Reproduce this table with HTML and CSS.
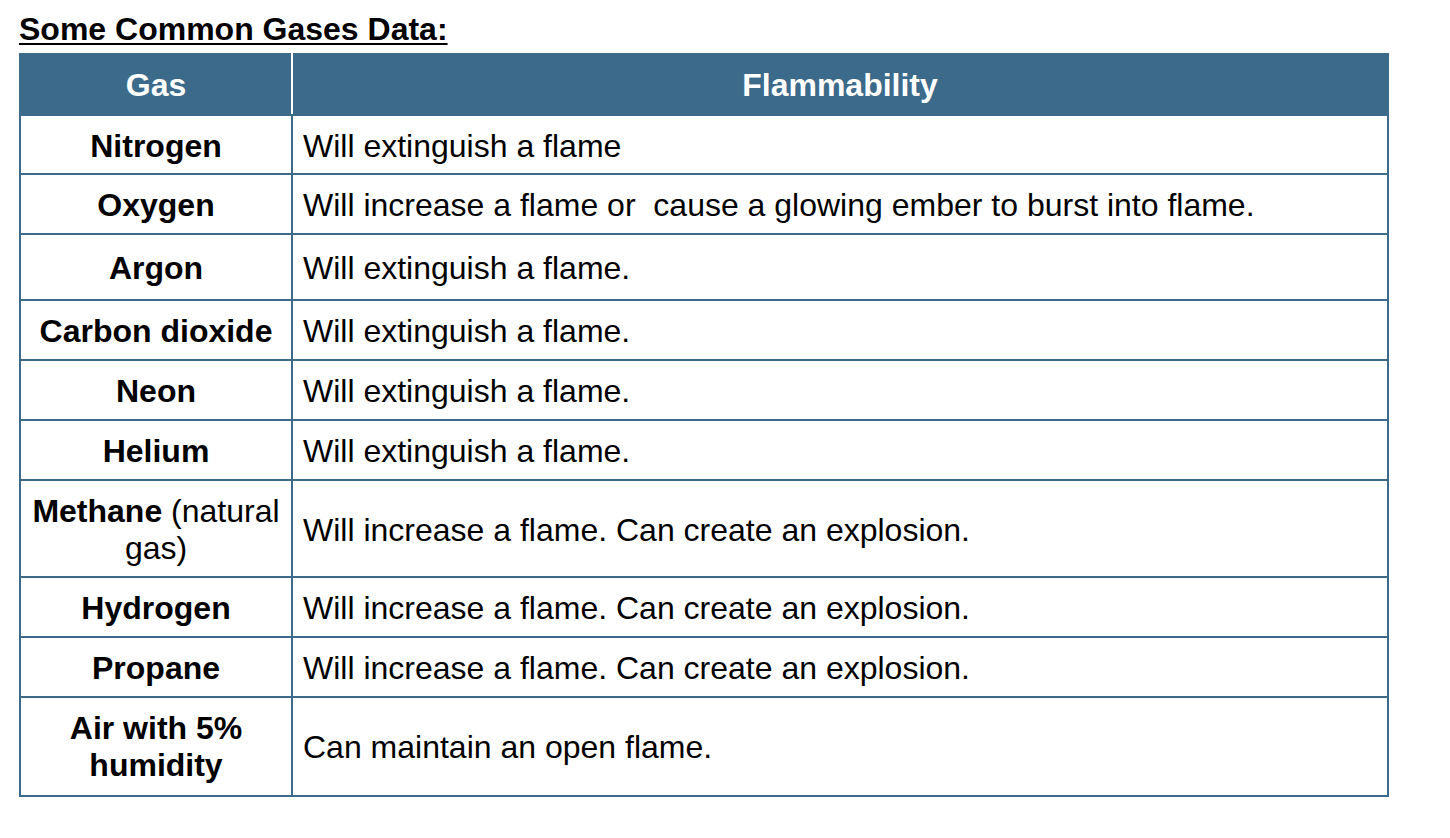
FILE: index.html
```html
<!DOCTYPE html>
<html lang="en">
<head>
<meta charset="utf-8">
<title>Some Common Gases Data</title>
<link rel="stylesheet" href="styles.css">
</head>
<body>
<h1 class="title">Some Common Gases Data:</h1>
<table class="gases">
  <colgroup>
    <col class="col-gas">
    <col class="col-flam">
  </colgroup>
  <thead>
    <tr class="head-row">
      <th class="h-gas">Gas</th>
      <th class="h-flam">Flammability</th>
    </tr>
  </thead>
  <tbody>
    <tr class="first"><td class="gas">Nitrogen</td><td class="flam">Will extinguish a flame</td></tr>
    <tr><td class="gas">Oxygen</td><td class="flam">Will increase a flame or&nbsp; cause a glowing ember to burst into flame.</td></tr>
    <tr class="tall"><td class="gas">Argon</td><td class="flam">Will extinguish a flame.</td></tr>
    <tr><td class="gas">Carbon dioxide</td><td class="flam">Will extinguish a flame.</td></tr>
    <tr><td class="gas">Neon</td><td class="flam">Will extinguish a flame.</td></tr>
    <tr><td class="gas">Helium</td><td class="flam">Will extinguish a flame.</td></tr>
    <tr><td class="gas">Methane <span class="note">(natural gas)</span></td><td class="flam">Will increase a flame. Can create an explosion.</td></tr>
    <tr><td class="gas">Hydrogen</td><td class="flam">Will increase a flame. Can create an explosion.</td></tr>
    <tr><td class="gas">Propane</td><td class="flam">Will increase a flame. Can create an explosion.</td></tr>
    <tr class="last"><td class="gas">Air with 5% humidity</td><td class="flam">Can maintain an open flame.</td></tr>
  </tbody>
</table>
</body>
</html>
```
FILE: styles.css
```css
html, body {
  background: #ffffff;
}
body {
  margin: 0;
  padding: 11px 0 0 19px;
  font-family: "Liberation Sans", Arial, sans-serif;
  font-size: 32px;
  line-height: 37px;
  color: #000;
}
.title {
  margin: 0 0 5px 0;
  font-size: 32px;
  line-height: 37px;
  font-weight: bold;
  text-decoration: underline;
  text-decoration-thickness: 2px;
  text-underline-offset: 3px;
}
.gases {
  border-collapse: collapse;
  width: 1370px;
  table-layout: fixed;
}
.col-gas {
  width: 272px;
}
.gases th,
.gases td {
  border: 2px solid #3b6a8a;
  vertical-align: middle;
}
.head-row th {
  background: #3b6a8a;
  color: #ffffff;
  font-weight: bold;
  text-align: center;
  height: 57px;
  padding: 2px 0 0 0;
}
.head-row .h-gas {
  border-right-color: #ffffff;
}
.gas {
  font-weight: bold;
  text-align: center;
  padding: 12px 8px 9px;
}
.note {
  font-weight: normal;
}
.flam {
  text-align: left;
  padding: 12px 9px 9px 10px;
}
.first td {
  padding-bottom: 8px;
}
.tall td {
  padding-top: 15px;
  padding-bottom: 12px;
}
.last td {
  padding-bottom: 11px;
}
```
